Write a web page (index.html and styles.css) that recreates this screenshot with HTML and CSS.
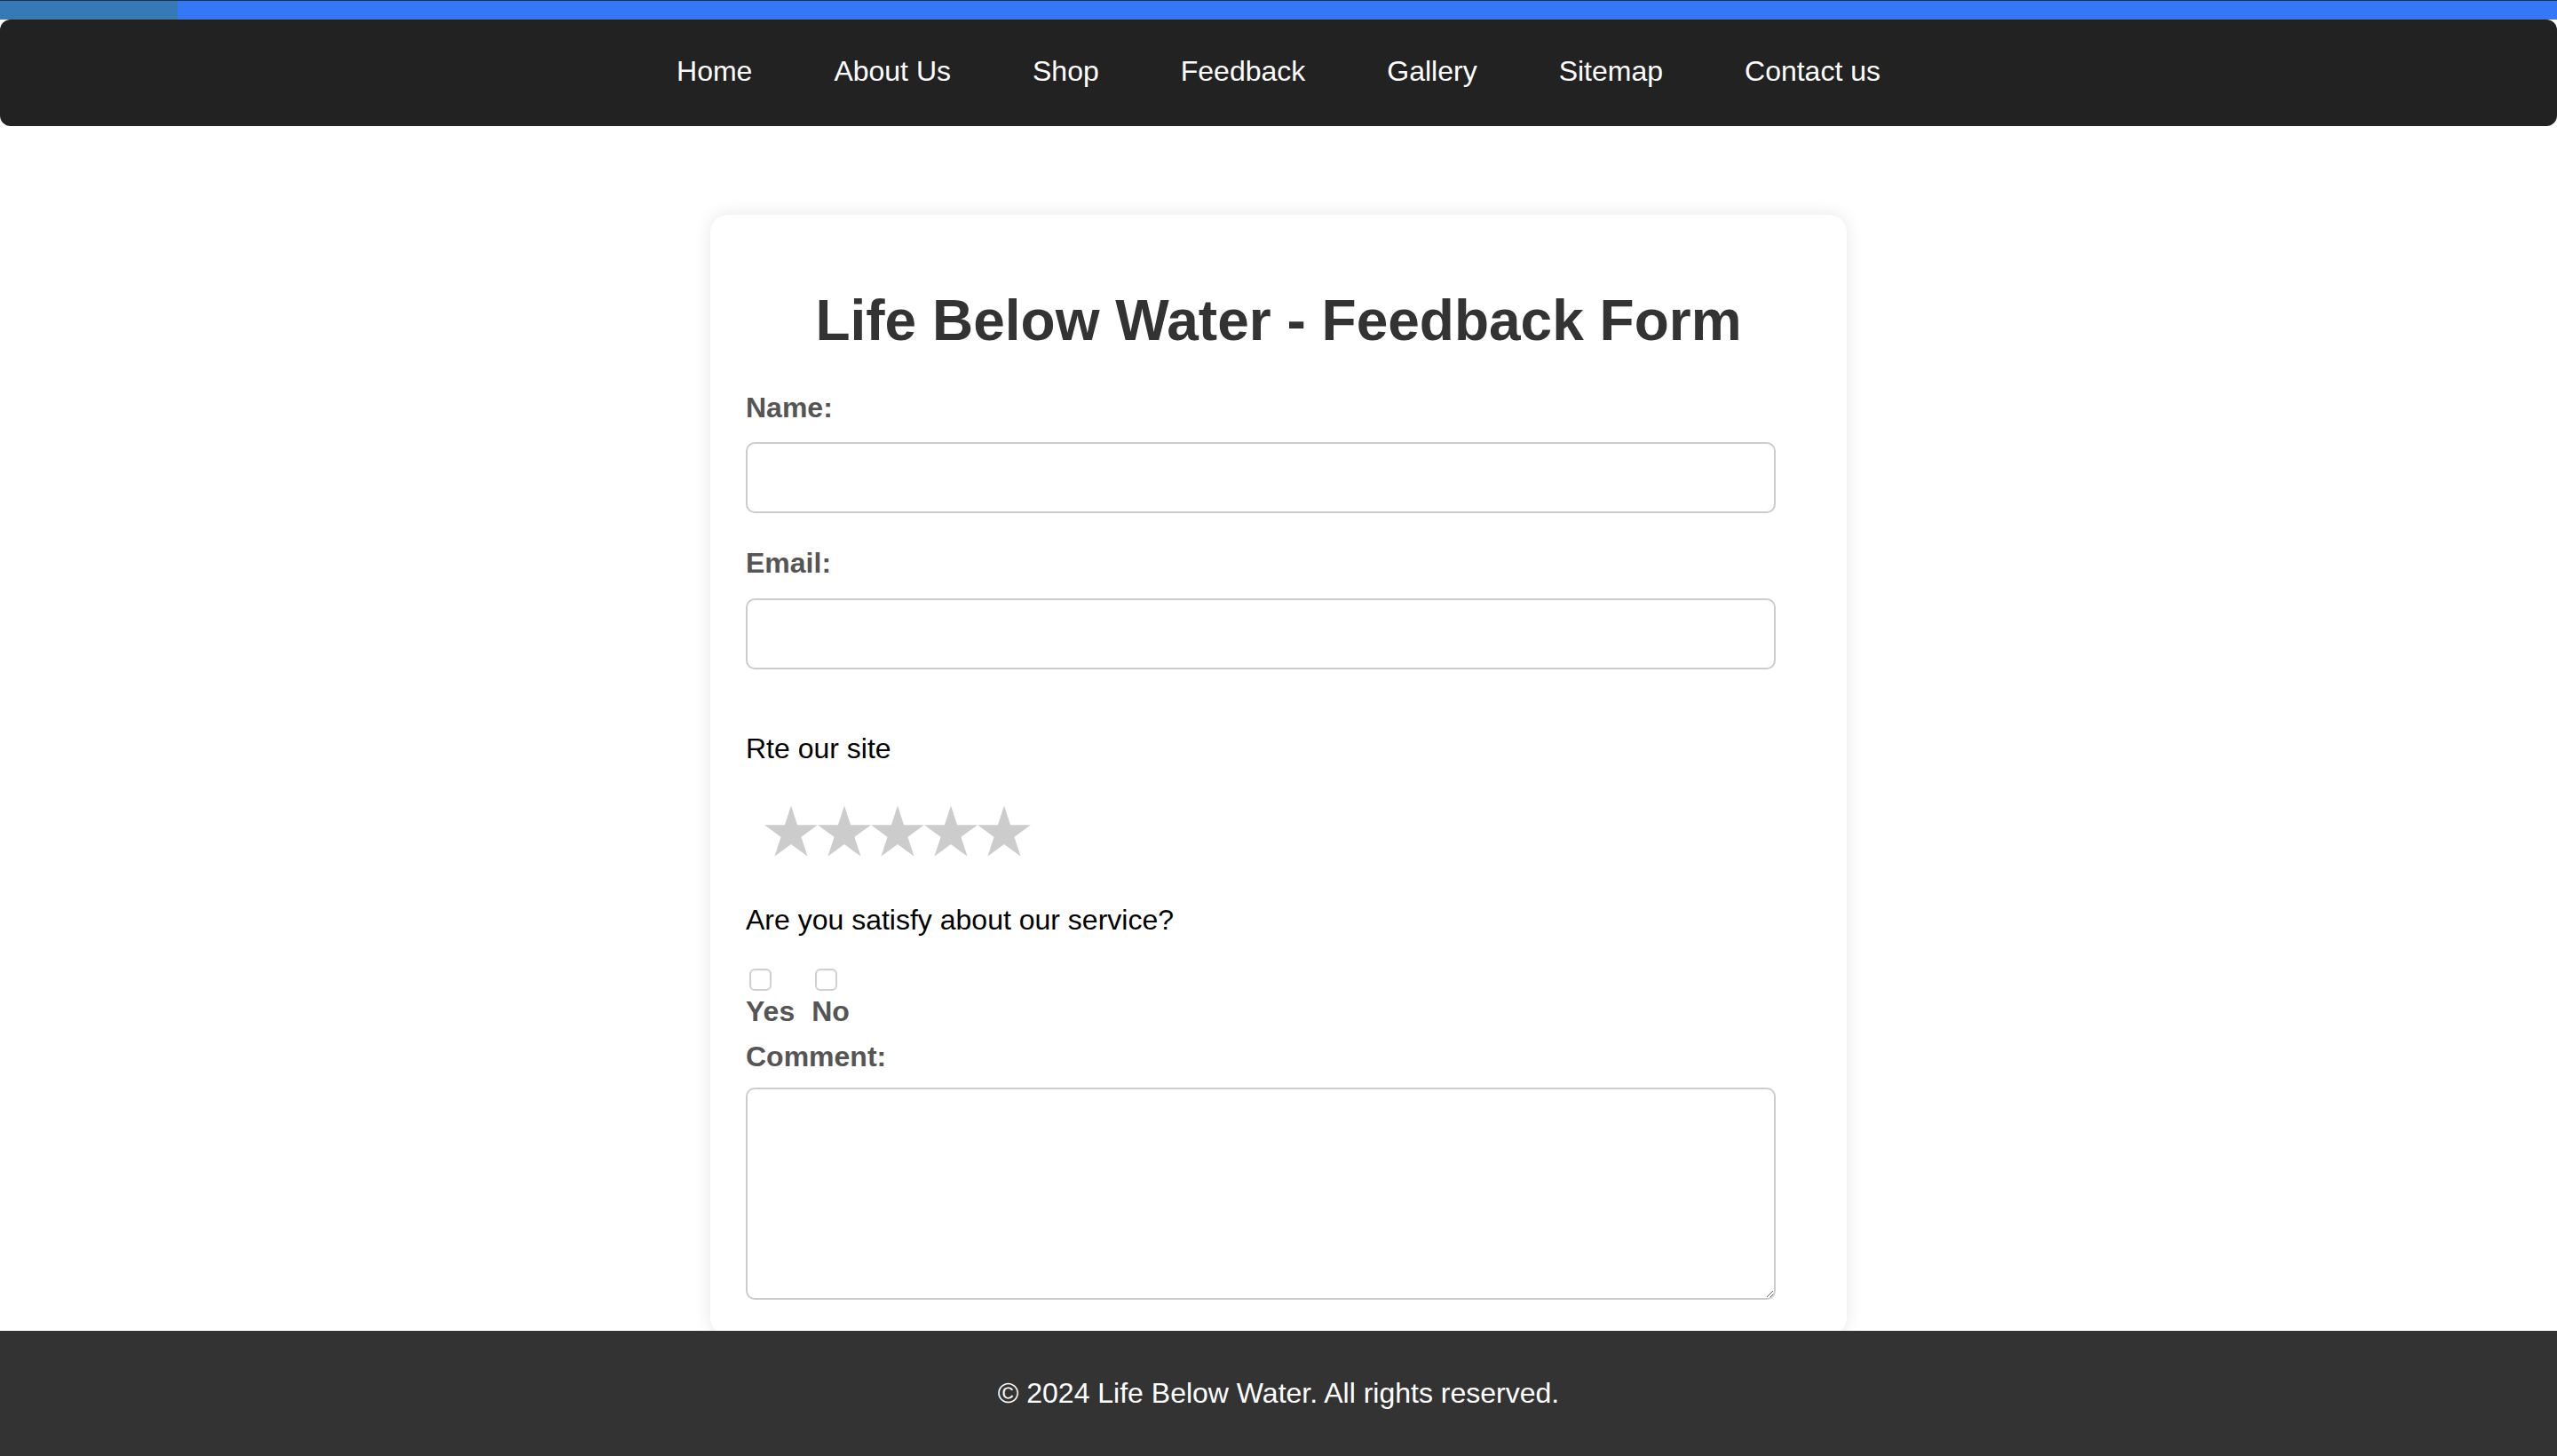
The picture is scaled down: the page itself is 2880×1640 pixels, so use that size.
FILE: index.html
```html
<!DOCTYPE html>
<html lang="en">
<head>
<meta charset="utf-8">
<title>Life Below Water - Feedback Form</title>
<link rel="stylesheet" href="styles.css">
</head>
<body>
<div class="topbar"><div class="topbar-fill"></div></div>
<nav class="navbar">
  <a class="nav-link" href="#">Home</a>
  <a class="nav-link" href="#">About Us</a>
  <a class="nav-link" href="#">Shop</a>
  <a class="nav-link" href="#">Feedback</a>
  <a class="nav-link" href="#">Gallery</a>
  <a class="nav-link" href="#">Sitemap</a>
  <a class="nav-link" href="#">Contact us</a>
</nav>
<main class="card">
  <h1 class="title">Life Below Water - Feedback Form</h1>
  <form class="form">
    <label class="field-label" for="name">Name:</label>
    <input class="text-input" id="name" type="text">
    <label class="field-label" for="email">Email:</label>
    <input class="text-input" id="email" type="email">
    <p class="question rate-title">Rte our site</p>
    <div class="stars">
      <svg class="star" viewBox="0 0 60 60" width="60" height="60"><path d="M30 0.5 L37.07 22.27 L59.96 22.27 L41.44 35.72 L48.52 57.48 L30 44.03 L11.48 57.48 L18.56 35.72 L0.04 22.27 L22.93 22.27 Z"/></svg>
      <svg class="star" viewBox="0 0 60 60" width="60" height="60"><path d="M30 0.5 L37.07 22.27 L59.96 22.27 L41.44 35.72 L48.52 57.48 L30 44.03 L11.48 57.48 L18.56 35.72 L0.04 22.27 L22.93 22.27 Z"/></svg>
      <svg class="star" viewBox="0 0 60 60" width="60" height="60"><path d="M30 0.5 L37.07 22.27 L59.96 22.27 L41.44 35.72 L48.52 57.48 L30 44.03 L11.48 57.48 L18.56 35.72 L0.04 22.27 L22.93 22.27 Z"/></svg>
      <svg class="star" viewBox="0 0 60 60" width="60" height="60"><path d="M30 0.5 L37.07 22.27 L59.96 22.27 L41.44 35.72 L48.52 57.48 L30 44.03 L11.48 57.48 L18.56 35.72 L0.04 22.27 L22.93 22.27 Z"/></svg>
      <svg class="star" viewBox="0 0 60 60" width="60" height="60"><path d="M30 0.5 L37.07 22.27 L59.96 22.27 L41.44 35.72 L48.52 57.48 L30 44.03 L11.48 57.48 L18.56 35.72 L0.04 22.27 L22.93 22.27 Z"/></svg>
    </div>
    <p class="question service-title">Are you satisfy about our service?</p>
    <div class="choices">
      <label class="choice"><input class="check" type="checkbox"><span class="choice-text">Yes</span></label>
      <label class="choice"><input class="check" type="checkbox"><span class="choice-text">No</span></label>
    </div>
    <label class="field-label comment-label" for="comment">Comment:</label>
    <textarea class="comment" id="comment"></textarea>
  </form>
</main>
<footer class="footer">
  <p class="footer-text">© 2024 Life Below Water. All rights reserved.</p>
</footer>
</body>
</html>
```
FILE: styles.css
```css
* {
  box-sizing: border-box;
}

body {
  margin: 0;
  background: #ffffff;
  font-family: "Liberation Sans", Arial, sans-serif;
  font-size: 32px;
  color: #000;
}

.topbar {
  height: 22px;
  border-top: 1px solid #26303c;
  background: #3478f6;
}

.topbar-fill {
  width: 200px;
  height: 100%;
  background: #367ab5;
}

.navbar {
  height: 120px;
  padding-bottom: 3px;
  background: #222222;
  border-radius: 12px;
  display: flex;
  justify-content: center;
  align-items: center;
}

.nav-link {
  padding: 0 46px;
  color: #ffffff;
  text-decoration: none;
  font-size: 32px;
  line-height: 1.15;
}

.card {
  width: 1280px;
  margin: 100px auto 0;
  padding: 40px;
  background: #ffffff;
  border-radius: 20px;
  box-shadow: 0 0 20px rgba(0, 0, 0, 0.1);
}

.title {
  margin: 43px 0 42px;
  font-size: 64px;
  line-height: 1.15;
  font-weight: bold;
  color: #333333;
  text-align: center;
}

.form {
  display: flex;
  flex-direction: column;
  align-items: flex-start;
}

.field-label {
  display: block;
  margin-bottom: 21px;
  font-size: 32px;
  line-height: 1.15;
  font-weight: bold;
  color: #555555;
}

.text-input {
  display: block;
  width: calc(100% - 40px);
  height: 80px;
  margin: 0 0 38px;
  padding: 0 20px;
  border: 2px solid #cccccc;
  border-radius: 10px;
  background: #fff;
  font-family: "Liberation Sans", Arial, sans-serif;
  font-size: 32px;
  outline: none;
}

.question {
  margin: 0;
  font-size: 32px;
  line-height: 1.15;
  color: #000;
}

.rate-title {
  margin-top: 33px;
}

.stars {
  display: flex;
  margin: 45px 0 0 21px;
}

.star {
  display: block;
  fill: #cccccc;
}

.service-title {
  margin-top: 51px;
}

.choices {
  display: flex;
  gap: 19px;
  margin-top: 30px;
}

.choice {
  display: flex;
  flex-direction: column;
  align-items: flex-start;
}

.check {
  appearance: none;
  -webkit-appearance: none;
  width: 25px;
  height: 25px;
  margin: 6px 0 5px 4px;
  border: 2px solid #d0d0d0;
  border-radius: 6px;
  background: #ffffff;
  box-shadow: inset 0 1px 2px rgba(0, 0, 0, 0.04);
}

.choice-text {
  font-size: 32px;
  line-height: 1.15;
  font-weight: bold;
  color: #555555;
}

.comment-label {
  margin-top: 14px;
  margin-bottom: 17px;
}

.comment {
  display: block;
  width: calc(100% - 40px);
  height: 239px;
  margin: 0;
  padding: 20px;
  border: 2px solid #cccccc;
  border-radius: 10px;
  font-family: "Liberation Sans", Arial, sans-serif;
  font-size: 32px;
  outline: none;
}

.footer {
  position: fixed;
  left: 0;
  right: 0;
  bottom: 0;
  height: 141px;
  background: #333333;
  display: flex;
  justify-content: center;
  align-items: center;
}

.footer-text {
  margin: 0;
  color: #ffffff;
  font-size: 32px;
  line-height: 1.15;
}
```
